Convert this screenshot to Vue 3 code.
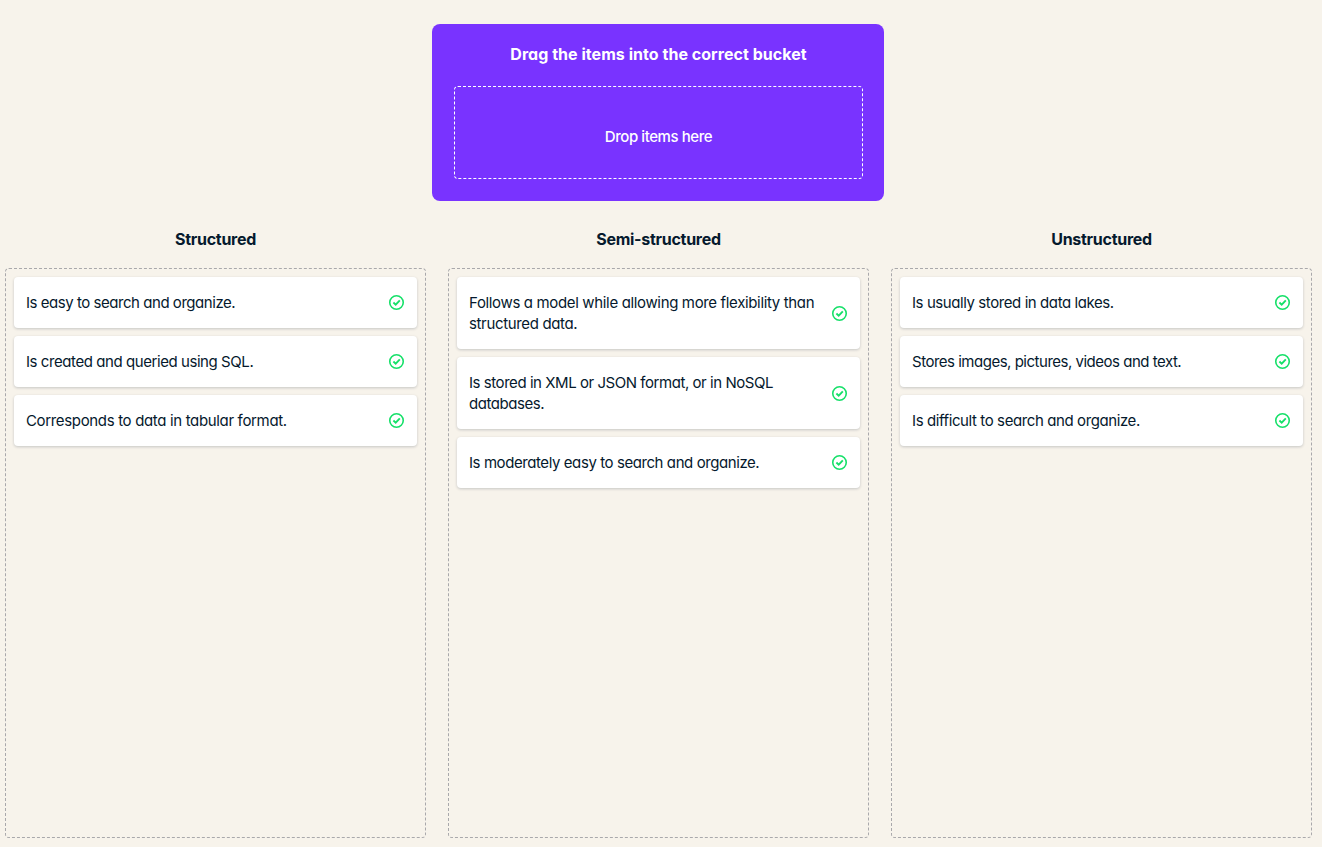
<script setup>
const buckets = [
  {
    title: 'Structured',
    items: [
      { text: 'Is easy to search and organize.', spacing: -0.46 },
      { text: 'Is created and queried using SQL.', spacing: -0.43 },
      { text: 'Corresponds to data in tabular format.', spacing: -0.34 },
    ],
  },
  {
    title: 'Semi-structured',
    items: [
      { text: 'Follows a model while allowing more flexibility than structured data.', spacing: -0.35 },
      { text: 'Is stored in XML or JSON format, or in NoSQL databases.', spacing: -0.45 },
      { text: 'Is moderately easy to search and organize.', spacing: -0.42 },
    ],
  },
  {
    title: 'Unstructured',
    items: [
      { text: 'Is usually stored in data lakes.', spacing: -0.42 },
      { text: 'Stores images, pictures, videos and text.', spacing: -0.49 },
      { text: 'Is difficult to search and organize.', spacing: -0.4 },
    ],
  },
]
</script>

<template>
  <main class="exercise">
    <section class="source">
      <h1 class="source-title">Drag the items into the correct bucket</h1>
      <div class="source-drop">Drop items here</div>
    </section>

    <div class="buckets">
      <section v-for="bucket in buckets" :key="bucket.title" class="bucket">
        <h2 class="bucket-title">{{ bucket.title }}</h2>
        <ul class="bucket-list">
          <li v-for="item in bucket.items" :key="item.text" class="card">
            <span class="card-text" :style="{ letterSpacing: item.spacing + 'px' }">{{ item.text }}</span>
            <svg class="check" viewBox="0 0 17 17" fill="none" aria-hidden="true">
              <circle cx="8.5" cy="8.5" r="6.75" stroke="#16e069" stroke-width="1.6" />
              <path d="M5.4 8.5 7.7 10.6 11.8 6.4" stroke="#16e069" stroke-width="1.9" />
            </svg>
          </li>
        </ul>
      </section>
    </div>
  </main>
</template>

<style>
body {
  background: #f7f3eb;
}
</style>

<style scoped>
.exercise {
  box-sizing: border-box;
  height: 847px;
  padding: 24px 10px 9px 5px;
  display: flex;
  flex-direction: column;
  align-items: center;
  background: #f7f3eb;
  color: #05192d;
  font-family: Inter, "Liberation Sans", sans-serif;
  font-feature-settings: "cv11";
}

.source {
  box-sizing: border-box;
  width: 452px;
  height: 177px;
  margin-right: 1px;
  padding: 18px 21px 22px 22px;
  display: flex;
  flex-direction: column;
  border-radius: 8px;
  background: #7933ff;
  color: #fff;
  text-align: center;
}

.source-title {
  margin: 0 0 20px;
  font-size: 16px;
  line-height: 24px;
  font-weight: 700;
  letter-spacing: 0.04px;
}

.source-drop {
  flex: 1;
  display: flex;
  align-items: center;
  justify-content: center;
  padding-top: 8px;
  border: 1px dashed #fff;
  border-radius: 4px;
  font-size: 15px;
  font-weight: 500;
  letter-spacing: -0.42px;
}

.buckets {
  flex: 1;
  align-self: stretch;
  display: grid;
  grid-template-columns: repeat(3, 1fr);
  gap: 22px;
  padding-top: 26px;
}

.bucket {
  display: flex;
  flex-direction: column;
}

.bucket-title {
  margin: 0 0 17px;
  font-size: 16px;
  line-height: 24px;
  font-weight: 650;
  letter-spacing: -0.28px;
  text-align: center;
}

.bucket-list {
  flex: 1;
  display: flex;
  flex-direction: column;
  gap: 8px;
  margin: 0;
  padding: 8px;
  border: 1px dashed #a9a8ab;
  border-radius: 4px;
  list-style: none;
}

.card {
  display: flex;
  align-items: center;
  justify-content: space-between;
  padding: 15px 12px;
  border-radius: 4px;
  background: #fff;
  box-shadow: 0 1px 3px rgba(5, 25, 45, 0.2);
}

.card-text {
  max-width: 350px;
  font-size: 15px;
  line-height: 21px;
}

.check {
  flex: none;
  width: 17px;
  height: 17px;
}
</style>
